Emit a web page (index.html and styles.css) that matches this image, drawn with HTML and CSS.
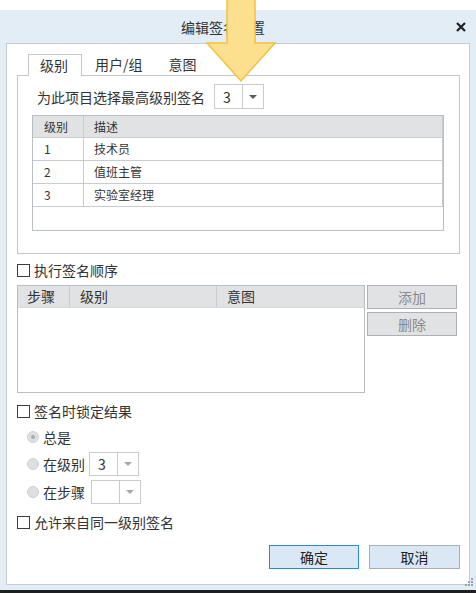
FILE: index.html
```html
<!DOCTYPE html>
<html lang="zh">
<head>
<meta charset="utf-8">
<title>编辑签名设置</title>
<link rel="stylesheet" href="styles.css">
</head>
<body>
<div class="screen">
  <div class="dialog">
    <div class="titlebar">
      <span class="title">编辑签名设置</span>
      <svg class="close" width="10" height="10" viewBox="0 0 10 10"><path d="M1 1L9 9M9 1L1 9" stroke="#1e1e1e" stroke-width="2.2" fill="none"/></svg>
    </div>
    <div class="panel">
      <div class="tabs">
        <div class="tab active">级别</div>
        <div class="tab">用户/组</div>
        <div class="tab">意图</div>
      </div>
      <div class="tabpanel">
        <div class="maxrow">
          <span class="maxlabel">为此项目选择最高级别签名</span>
          <div class="combo combo-top"><span class="val">3</span><span class="drop"><i class="tri"></i></span></div>
        </div>
        <div class="levels">
          <div class="lrow lhead"><div class="c1">级别</div><div class="c2">描述</div></div>
          <div class="lrow"><div class="c1">1</div><div class="c2">技术员</div></div>
          <div class="lrow"><div class="c1">2</div><div class="c2">值班主管</div></div>
          <div class="lrow"><div class="c1">3</div><div class="c2">实验室经理</div></div>
        </div>
      </div>

      <label class="check row-order"><span class="box"></span><span>执行签名顺序</span></label>

      <div class="steps">
        <div class="steptable">
          <div class="shead"><div class="s1">步骤</div><div class="s2">级别</div><div class="s3">意图</div></div>
        </div>
        <div class="sidebtns">
          <div class="btn disabled">添加</div>
          <div class="btn disabled">删除</div>
        </div>
      </div>

      <label class="check row-lock"><span class="box"></span><span>签名时锁定结果</span></label>

      <div class="radio row-always"><span class="dot on"></span><span>总是</span></div>
      <div class="radio row-level"><span class="dot"></span><span>在级别</span>
        <div class="combo combo-lv"><span class="val">3</span><span class="drop"><i class="tri light"></i></span></div>
      </div>
      <div class="radio row-step"><span class="dot"></span><span>在步骤</span>
        <div class="combo combo-st"><span class="val"></span><span class="drop"><i class="tri light"></i></span></div>
      </div>

      <label class="check row-allow"><span class="box"></span><span>允许来自同一级别签名</span></label>

      <div class="footer">
        <div class="btn primary">确定</div>
        <div class="btn cancel">取消</div>
      </div>
    </div>
    <svg class="grip" width="12" height="12" viewBox="0 0 12 12">
      <rect x="9" y="1" width="2" height="2" fill="#9aa3ab"/>
      <rect x="6" y="4" width="2" height="2" fill="#9aa3ab"/>
      <rect x="9" y="4" width="2" height="2" fill="#9aa3ab"/>
      <rect x="3" y="7" width="2" height="2" fill="#9aa3ab"/>
      <rect x="6" y="7" width="2" height="2" fill="#9aa3ab"/>
      <rect x="9" y="7" width="2" height="2" fill="#9aa3ab"/>
    </svg>
  </div>
  <div class="bottombar"></div>
  <svg class="arrow" width="476" height="90" viewBox="0 0 476 90">
    <polygon points="227,-2 255,-2 255,43 275,43 241,81 207,43 227,43" fill="#fde08e" stroke="#f3c13e" stroke-width="1.5" stroke-linejoin="miter"/>
  </svg>
</div>
</body>
</html>
```
FILE: styles.css
```css
* { box-sizing: border-box; }
html, body { margin: 0; padding: 0; }
body {
  background: #ffffff;
  font-family: "Noto Sans CJK SC", "Noto Sans", sans-serif;
  font-size: 14px;
  color: #333333;
}
.screen {
  position: relative;
  width: 476px;
  height: 593px;
  overflow: hidden;
  padding-top: 10px;
}
.dialog {
  position: relative;
  height: 580px;
  background: #e3edf5;
  display: flex;
  flex-direction: column;
}
.bottombar {
  height: 3px;
  background: #1f1f1f;
}
.titlebar {
  height: 33px;
  display: flex;
  align-items: center;
}
.title {
  width: 446px;
  text-align: center;
  font-size: 14px;
  line-height: 20px;
  color: #333;
  padding-top: 1px;
}
.close {
  margin-left: 10px;
  display: block;
}
.panel {
  margin-left: 6px;
  width: 464px;
  height: 542px;
  background: #ffffff;
  border: 1px solid #c6ccd2;
  padding: 10px 9px 0 10px;
}
.tabs {
  display: flex;
  height: 21px;
  padding-left: 11px;
}
.tab {
  height: 21px;
  line-height: 20px;
  padding: 0 13px;
  color: #333;
}
.tab.active {
  width: 54px;
  padding: 0 0 0 11px;
  height: 22px;
  border: 1px solid #c3c7cc;
  border-bottom: none;
  background: #fff;
  position: relative;
  z-index: 1;
  line-height: 20px;
}
.tabpanel {
  height: 179px;
  border: 1px solid #c3c7cc;
  padding: 8px 15px 0 14px;
}
.maxrow {
  display: flex;
  align-items: center;
  height: 25px;
  padding-left: 5px;
}
.maxlabel {
  line-height: 20px;
  width: 177px;
}
.combo {
  display: flex;
  border: 1px solid #c8ccd0;
  background: #fff;
}
.combo .val {
  width: 28px;
  padding-left: 8px;
  border-right: 1px solid #c8ccd0;
  line-height: 20px;
}
.combo .drop {
  flex: 1;
  display: flex;
  align-items: center;
  justify-content: center;
}
.tri {
  display: block;
  width: 0;
  height: 0;
  border-left: 4px solid transparent;
  border-right: 4px solid transparent;
  border-top: 4px solid #5a5a5a;
}
.tri.light { border-top-color: #a8a8a8; }
.combo-top {
  width: 50px;
  height: 25px;
  margin-left: 0;
  align-items: stretch;
}
.combo-top .val { display: flex; align-items: center; }
.levels {
  margin-top: 6px;
  height: 116px;
  border: 1px solid #b9bec3;
}
.lrow {
  display: flex;
  height: 23px;
  border-bottom: 1px solid #c8ccd0;
  border-right: 1px solid #c8ccd0;
  font-size: 12px;
  line-height: 22px;
  color: #333;
}
.lrow.lhead {
  height: 22px;
  line-height: 21px;
  background: #e1e2e4;
}
.lrow .c1 {
  width: 51px;
  padding-left: 11px;
  border-right: 1px solid #c8ccd0;
}
.lrow .c2 {
  flex: 1;
  padding-left: 10px;
}
.check {
  display: flex;
  align-items: center;
  height: 18px;
  line-height: 18px;
  gap: 4px;
}
.check .box {
  width: 13px;
  height: 13px;
  border: 1px solid #3c3c3c;
  background: #fff;
}
.row-order { margin-top: 7px; }
.row-lock { margin-top: 9px; }
.row-allow { margin-top: 9px; }
.steps {
  margin-top: 6px;
  height: 108px;
  display: flex;
  gap: 2px;
}
.steptable {
  width: 348px;
  height: 108px;
  border: 1px solid #b9bec3;
}
.shead {
  display: flex;
  height: 22px;
  line-height: 21px;
  background: #e1e2e4;
  border-bottom: 1px solid #d6d9dc;
  font-size: 14px;
}
.shead .s1 { width: 52px; padding-left: 9px; border-right: 1px solid #c8ccd0; }
.shead .s2 { width: 147px; padding-left: 10px; border-right: 1px solid #c8ccd0; }
.shead .s3 { flex: 1; padding-left: 10px; }
.sidebtns {
  display: flex;
  flex-direction: column;
  gap: 3px;
}
.btn {
  width: 90px;
  height: 24px;
  line-height: 22px;
  text-align: center;
  border: 1px solid #adb1b5;
  font-size: 14px;
}
.btn.disabled {
  background: #e1e2e4;
  color: #8a8a8a;
}
.radio {
  display: flex;
  align-items: center;
  padding-left: 10px;
  gap: 4px;
  line-height: 18px;
  color: #333;
}
.dot {
  width: 12px;
  height: 12px;
  border-radius: 50%;
  background: #dedfe0;
  border: 1px solid #cfd0d2;
  display: flex;
  align-items: center;
  justify-content: center;
}
.dot.on::after {
  content: "";
  width: 4px;
  height: 4px;
  border-radius: 50%;
  background: #a9abad;
}
.row-always { margin-top: 8px; height: 18px; }
.row-level { margin-top: 6px; height: 24px; }
.row-step { margin-top: 4px; height: 24px; }
.combo-lv { width: 50px; height: 24px; margin-left: 0; }
.combo-st { width: 50px; height: 24px; margin-left: 2px; }
.combo-lv .val, .combo-st .val { line-height: 22px; }
.footer {
  margin-top: 14px;
  display: flex;
  justify-content: flex-end;
  gap: 10px;
}
.btn.primary {
  background: #dae8f5;
  border-color: #2b89d6;
  color: #222;
}
.btn.cancel {
  width: 91px;
  background: #dae8f5;
  border-color: #a9aeb3;
  color: #222;
}
.grip {
  position: absolute;
  right: 2px;
  bottom: 1px;
}
.arrow {
  position: absolute;
  left: 0;
  top: 0;
}
```
